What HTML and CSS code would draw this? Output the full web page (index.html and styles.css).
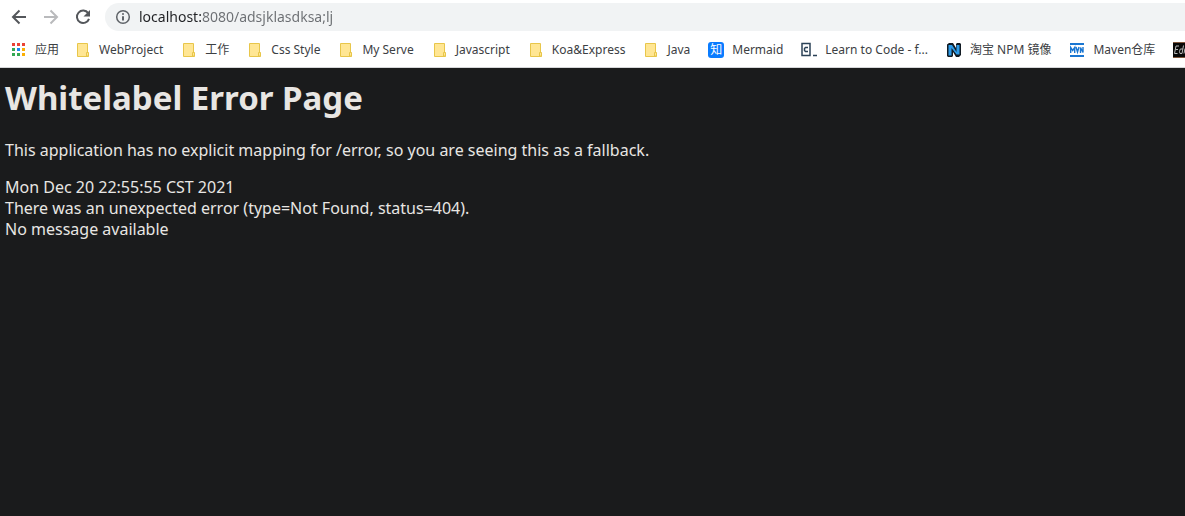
FILE: index.html
```html
<!DOCTYPE html>
<html lang="en">
<head>
<meta charset="utf-8">
<meta name="viewport" content="width=device-width, initial-scale=1">
<title>Whitelabel Error Page</title>
<link rel="stylesheet" href="styles.css">
</head>
<body>
<svg class="sprite" aria-hidden="true">
  <symbol id="folder" viewBox="0 0 16 16">
    <path d="M2.500 1.500h10v9.500h1v3.500h-11z" fill="#ffe694" stroke="#e8c64a"/>
    <path d="M11.500 14v-3.500h2v3.500z" fill="#ffe694" stroke="#e8c64a"/>
  </symbol>
</svg>
<header class="browser">
  <div class="toolbar">
    <button class="nav" type="button" aria-label="Back">
      <svg class="nav-icon" viewBox="0 0 16 16"><path d="M15 8H2M8.500 1.500 2 8l6.500 6.500"/></svg>
    </button>
    <button class="nav nav-off" type="button" aria-label="Forward" disabled>
      <svg class="nav-icon" viewBox="0 0 16 16"><path d="M1 8h13M7.500 1.500 14 8l-6.500 6.500"/></svg>
    </button>
    <button class="nav" type="button" aria-label="Reload">
      <svg class="nav-icon" viewBox="0 0 16 16"><path d="M13.200 4.200A6.200 6.200 0 1 0 14 9.800"/><path class="solid" d="M15 1v6.500H8.500z"/></svg>
    </button>
    <div class="omnibox">
      <svg class="info" viewBox="0 0 16 16"><circle cx="8" cy="8" r="6.300"/><path d="M8 7.200v4.300M8 4.200v1.600"/></svg>
      <input class="url" type="text" aria-label="Address" value="localhost:8080/adsjklasdksa;lj" spellcheck="false">
    </div>
  </div>
  <nav class="bookmarks" aria-label="Bookmarks">
    <a class="mark apps" href="#"><svg class="icon" viewBox="0 0 16 16">
      <path fill="#ea4335" d="M1 1h3v3H1zM6 1h3v3H6zM11 1h3v3h-3z"/><path fill="#34a853" d="M1 6h3v3H1zM1 11h3v3H1z"/><path fill="#1a88f0" d="M6 6h3v3H6z"/><path fill="#fbaf05" d="M11 6h3v3h-3zM11 11h3v3h-3z"/><path fill="#34a853" d="M6 11h3v3H6z"/></svg><span>应用</span></a>
    <a class="mark" href="#"><svg class="icon"><use href="#folder"/></svg><span>WebProject</span></a>
    <a class="mark" href="#"><svg class="icon"><use href="#folder"/></svg><span>工作</span></a>
    <a class="mark" href="#"><svg class="icon"><use href="#folder"/></svg><span>Css Style</span></a>
    <a class="mark" href="#"><svg class="icon"><use href="#folder"/></svg><span>My Serve</span></a>
    <a class="mark" href="#"><svg class="icon"><use href="#folder"/></svg><span>Javascript</span></a>
    <a class="mark" href="#"><svg class="icon"><use href="#folder"/></svg><span>Koa&amp;Express</span></a>
    <a class="mark" href="#"><svg class="icon"><use href="#folder"/></svg><span>Java</span></a>
    <a class="mark" href="#"><span class="icon zhi">知</span><span>Mermaid</span></a>
    <a class="mark" href="#"><svg class="icon" viewBox="0 0 16 16"><path d="M1 1.500h8v12H1zM12 13.500h4M7 5.500H4.500l-1 1v2l1 1H7" fill="none" stroke="#2b4257" stroke-width="1.500"/></svg><span>Learn to Code - f...</span></a>
    <a class="mark" href="#"><svg class="icon" viewBox="0 0 16 16"><path d="M1 2.500 3 1h4l3 5V2l1-1h3l1 1v11l-2 2h-3L7 10v4l-1 1H2l-1-1z" fill="#111a22"/><path d="M2.500 3H6l4.500 7V3h3v9.500h-3L5.500 6v7.500h-3z" fill="#2d9be8"/></svg><span>淘宝 NPM 镜像</span></a>
    <a class="mark" href="#"><svg class="icon" viewBox="0 0 16 16"><path d="M1 1h14v2H1zM1 13h14v2H1z" fill="#1976d2"/><path d="M1.700 11V5.500l2 3 2-3V11M7 5l1.500 5L10 5M11.500 11V5.500l2.500 5V5" fill="none" stroke="#1976d2" stroke-width="1.400"/></svg><span>Maven仓库</span></a>
    <a class="mark" href="#" aria-label="Editor"><svg class="icon" viewBox="0 0 16 16"><path d="M0 0h16v16H0z" fill="#080808"/><path d="M0 .5h16M0 15.500h16" stroke="#80573d"/><path d="M6 4H3L1.500 11.500h3M2.500 7.500h2.500M10.500 3.500 9 11.500H7l-.5-2 .8-2.500h2.500M12 6.500l-1 5" fill="none" stroke="#b8b8b8"/></svg></a>
  </nav>
</header>
<main class="page">
  <h1 class="title">Whitelabel Error Page</h1>
  <p class="lead">This application has no explicit mapping for /error, so you are seeing this as a fallback.</p>
  <div>Mon Dec 20 22:55:55 CST 2021</div>
  <div>There was an unexpected error (type=Not Found, status=404).</div>
  <div>No message available</div>
</main>
</body>
</html>
```
FILE: styles.css
```css
* { box-sizing: border-box; }
body {
  margin: 0;
  min-height: 100vh;
  display: flex;
  flex-direction: column;
  background: #1a1b1c;
  font-family: "Noto Sans", "Noto Sans CJK SC", sans-serif;
}
.sprite { display: none; }
.browser {
  background: #fff;
  border-bottom: 1px solid #d5d6d8;
  overflow: hidden;
}
.toolbar {
  display: flex;
  align-items: center;
  gap: 16px;
  padding: 3px 0 0 11px;
}
.nav {
  width: 16px;
  height: 16px;
  padding: 0;
  border: 0;
  background: none;
  color: #54575b;
}
.nav-off { color: #b9babc; }
.nav-icon {
  display: block;
  width: 16px;
  height: 16px;
  fill: none;
  stroke: currentColor;
  stroke-width: 2;
}
.nav-icon .solid { fill: currentColor; stroke: none; }
.omnibox {
  flex: 1;
  display: flex;
  align-items: center;
  gap: 8px;
  height: 28px;
  margin-left: -2px;
  padding-left: 10px;
  background: #f1f3f4;
  border-radius: 14px 0 0 14px;
}
.info {
  width: 16px;
  height: 16px;
  fill: none;
  stroke: #5f6368;
  stroke-width: 2;
}
.info circle { stroke-width: 1.5; }
.url {
  flex: 1;
  min-width: 0;
  padding: 0;
  border: 0;
  outline: 0;
  font: 14px/20px "Noto Sans", sans-serif;
  color: transparent;
  background: linear-gradient(90deg, #202124 62px, #6b6e72 62px);
  -webkit-background-clip: text;
  background-clip: text;
}
.bookmarks {
  display: flex;
  align-items: center;
  gap: 18px;
  height: 36px;
  padding: 1px 0 0 11px;
}
.mark {
  display: flex;
  flex: none;
  align-items: center;
  gap: 8px;
  font-size: 12px;
  line-height: 16px;
  color: #3c4043;
  text-decoration: none;
  white-space: nowrap;
}
.apps { margin-right: -2px; }
.icon { flex: none; width: 16px; height: 16px; }
.zhi {
  border-radius: 3px;
  background: #0a7cff;
  color: #fff;
  text-align: center;
}
.page {
  flex: 1;
  padding: 6px 5px;
  color: #e8e6e3;
  font-size: 16px;
  line-height: 21px;
}
.title {
  margin: 0 0 18px;
  font-size: 33px;
  line-height: 48px;
}
.lead { margin: 0 0 16px; }
```
